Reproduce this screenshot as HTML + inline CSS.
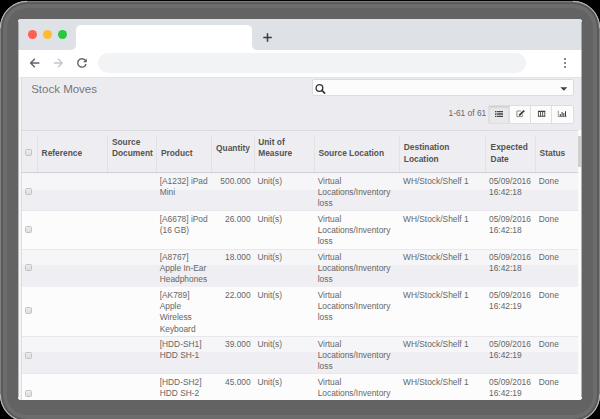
<!DOCTYPE html>
<html><head><meta charset="utf-8"><style>
*{margin:0;padding:0;box-sizing:border-box}
html,body{width:600px;height:419px;overflow:hidden;background:#000}
body{position:relative;font-family:"Liberation Sans",sans-serif}
.a{position:absolute}
.frame{left:0;top:1px;width:600px;height:420.5px;border-radius:27px;background:#636363;box-shadow:inset 0 0 0 1.2px #7e7e7e,inset 0 0 0 3px #585858,inset 0 0 0 7px #6c6c6c}
.screen{left:18px;top:19px;width:563.5px;height:380.7px;border-radius:3px;overflow:hidden;background:#ececf0}
.inner{left:-18px;top:-19px;width:600px;height:419px}
.t{white-space:nowrap;font-size:8.40px;line-height:11.25px;color:#666}
.h{white-space:nowrap;font-size:8.40px;line-height:11.25px;color:#535353;font-weight:bold}
.dot{width:9px;height:9px;border-radius:50%}
.cb{width:7px;height:7px;border:1px solid #c2c2c2;border-radius:1.5px;background:linear-gradient(#ececec,#dddddd)}
</style></head><body>
<div class="a frame"></div>
<div class="a screen"><div class="a inner">
<div class="a" style="left:18px;top:19px;width:564px;height:31px;background:#dee1e6"></div>
<div class="a dot" style="left:28.2px;top:30.3px;background:#fe5f57"></div>
<div class="a dot" style="left:42.6px;top:30.3px;background:#febc2e"></div>
<div class="a dot" style="left:57.6px;top:30.3px;background:#28c840"></div>
<div class="a" style="left:70px;top:44px;width:188px;height:6px;background:#fff"></div>
<div class="a" style="left:60px;top:40px;width:16px;height:10px;background:#dee1e6;border-bottom-right-radius:5px"></div>
<div class="a" style="left:252px;top:40px;width:16px;height:10px;background:#dee1e6;border-bottom-left-radius:5px"></div>
<div class="a" style="left:76px;top:25px;width:176px;height:25px;background:#fff;border-radius:5px 5px 0 0"></div>
<svg class="a" style="left:262px;top:32px" width="12" height="12" viewBox="0 0 12 12"><path d="M5.5 1.3V9.8M1.3 5.5H9.8" stroke="#3a3d40" stroke-width="1.5"/></svg>
<div class="a" style="left:18px;top:50px;width:564px;height:27.5px;background:#fff;border-bottom:1px solid #e4e4e8"></div>
<svg class="a" style="left:28px;top:57px" width="14" height="12" viewBox="0 0 14 12"><path d="M11.4 6H3M6.8 1.7L2.6 6L6.8 10.3" fill="none" stroke="#5f6368" stroke-width="1.4"/></svg>
<svg class="a" style="left:52px;top:57px" width="14" height="12" viewBox="0 0 14 12"><path d="M1.8 6H10M6 1.7L10.2 6L6 10.3" fill="none" stroke="#c4c7cb" stroke-width="1.4"/></svg>
<svg class="a" style="left:75px;top:57px" width="14" height="12" viewBox="0 0 14 12"><path d="M10.2 3.3A4.2 4.2 0 1 0 11 7" fill="none" stroke="#5f6368" stroke-width="1.4"/><path d="M11.8 1.4V5.2H8Z" fill="#5f6368"/></svg>
<div class="a" style="left:98px;top:53px;width:428px;height:20px;border-radius:10px;background:#f1f3f4"></div>
<div class="a" style="left:563.9px;top:58.1px;width:2.2px;height:2.2px;border-radius:50%;background:#5f6368"></div>
<div class="a" style="left:563.9px;top:62.0px;width:2.2px;height:2.2px;border-radius:50%;background:#5f6368"></div>
<div class="a" style="left:563.9px;top:65.9px;width:2.2px;height:2.2px;border-radius:50%;background:#5f6368"></div>
<div class="a" style="left:18px;top:77px;width:3px;height:330px;background:#f4f4f7"></div>
<div class="a" style="left:21px;top:77px;width:1px;height:330px;background:#dcdce2"></div>
<div class="a" style="left:31.2px;top:82.42px;font-size:11.5px;line-height:14px;color:#777;white-space:nowrap">Stock Moves</div>
<div class="a" style="left:312px;top:79px;width:261.5px;height:17px;background:#fcfcfd;border:1px solid #dcdce0;border-radius:2px"></div>
<svg class="a" style="left:315px;top:83px" width="12" height="12" viewBox="0 0 12 12"><circle cx="4.45" cy="5" r="3.35" fill="none" stroke="#333" stroke-width="1.35"/><path d="M6.9 7.4L9.6 10.1" stroke="#333" stroke-width="1.6" stroke-linecap="round"/></svg>
<svg class="a" style="left:559.5px;top:86.8px" width="8" height="4" viewBox="0 0 8 4"><path d="M0.3 0.2H7.3L3.8 3.8Z" fill="#404040"/></svg>
<div class="a t" style="left:448.5px;top:108.06px">1-61 of 61</div>
<div class="a" style="left:488px;top:104.5px;width:86px;height:19px;border:1px solid #dedede;border-radius:2px;background:#fcfcfc"></div>
<div class="a" style="left:489px;top:105.5px;width:20px;height:17px;background:#e9e9eb;box-shadow:inset 0 1.5px 2px rgba(0,0,0,.12)"></div>
<div class="a" style="left:509px;top:105px;width:1px;height:18px;background:#dedede"></div>
<div class="a" style="left:530px;top:105px;width:1px;height:18px;background:#dedede"></div>
<div class="a" style="left:551px;top:105px;width:1px;height:18px;background:#dedede"></div>
<svg class="a" style="left:494px;top:110px" width="10" height="8" viewBox="0 0 10 8"><path d="M1 1.6h1.5M1 4h1.5M1 6.4h1.5M3.1 1.6h5.9M3.1 4h5.9M3.1 6.4h5.9" stroke="#444" stroke-width="1.3"/></svg>
<svg class="a" style="left:515px;top:109px" width="11" height="10" viewBox="0 0 11 10"><path d="M6 2H1.9V7.6H7.4V5.6" fill="none" stroke="#8a8a8a" stroke-width="1"/><path d="M4.2 6.4L9.2 1.6" stroke="#333" stroke-width="1.7"/></svg>
<svg class="a" style="left:537px;top:110px" width="9" height="8" viewBox="0 0 9 8"><path d="M1 0.7H8.2V2H1Z" fill="#383838"/><path d="M1.45 1V6.7M3.55 1V6.7M5.65 1V6.7M7.75 1V6.7M1 6.25H8.2" stroke="#484848" stroke-width="0.9"/></svg>
<svg class="a" style="left:557px;top:110px" width="11" height="8" viewBox="0 0 11 8"><path d="M1.3 0.7V6.6H9.6" fill="none" stroke="#8a8a8a" stroke-width="0.9"/><path d="M2.8 4H3.8V6.4H2.8ZM4.6 2H5.6V6.4H4.6ZM6.3 3H7.3V6.4H6.3ZM8 1.3H9V6.4H8Z" fill="#3c3c3c"/></svg>
<div class="a" style="left:22px;top:130px;width:556px;height:42px;background:#eeeef2;border-top:1px solid #dcdce0"></div>
<div class="a" style="left:37px;top:134.5px;width:1px;height:37px;background:#e2e2e6"></div>
<div class="a" style="left:107px;top:134.5px;width:1px;height:37px;background:#e2e2e6"></div>
<div class="a" style="left:156px;top:134.5px;width:1px;height:37px;background:#e2e2e6"></div>
<div class="a" style="left:211px;top:134.5px;width:1px;height:37px;background:#e2e2e6"></div>
<div class="a" style="left:254px;top:134.5px;width:1px;height:37px;background:#e2e2e6"></div>
<div class="a" style="left:314px;top:134.5px;width:1px;height:37px;background:#e2e2e6"></div>
<div class="a" style="left:399px;top:134.5px;width:1px;height:37px;background:#e2e2e6"></div>
<div class="a" style="left:485px;top:134.5px;width:1px;height:37px;background:#e2e2e6"></div>
<div class="a" style="left:535px;top:134.5px;width:1px;height:37px;background:#e2e2e6"></div>
<div class="a cb" style="left:25px;top:149px"></div>
<div class="a h" style="left:41.6px;top:148.36px">Reference</div>
<div class="a h" style="left:111.9px;top:137.36px">Source</div>
<div class="a h" style="left:111.9px;top:148.36px">Document</div>
<div class="a h" style="left:160.9px;top:148.36px">Product</div>
<div class="a h" style="left:216.0px;top:142.86px">Quantity</div>
<div class="a h" style="left:258.2px;top:137.36px">Unit of</div>
<div class="a h" style="left:258.2px;top:148.36px">Measure</div>
<div class="a h" style="left:318.4px;top:148.36px">Source Location</div>
<div class="a h" style="left:403.8px;top:142.36px">Destination</div>
<div class="a h" style="left:403.8px;top:153.66px">Location</div>
<div class="a h" style="left:490.6px;top:142.36px">Expected</div>
<div class="a h" style="left:490.6px;top:153.66px">Date</div>
<div class="a h" style="left:539.6px;top:148.36px">Status</div>
<div class="a" style="left:577.5px;top:130px;width:5px;height:280px;background:#fbfbfb"></div>
<div class="a" style="left:578px;top:135.7px;width:3px;height:31px;background:#cfcfcf"></div>
<div class="a" style="left:22px;top:172px;width:556px;height:1px;background:#cfcfd3"></div>
<div class="a" style="left:22px;top:173px;width:556px;height:38px;background:#efeff3"></div>
<div class="a" style="left:22px;top:173px;width:556px;height:16.5px;background:#f6f6f8"></div>
<div class="a cb" style="left:25px;top:188px"></div>
<div class="a t" style="left:159.7px;top:175.96px">[A1232] iPad<br>Mini</div>
<div class="a t" style="right:349.4px;top:175.96px;text-align:right">500.000</div>
<div class="a t" style="left:257.4px;top:175.96px">Unit(s)</div>
<div class="a t" style="left:317.7px;top:175.96px">Virtual<br>Locations/Inventory<br>loss</div>
<div class="a t" style="left:403.0px;top:175.96px">WH/Stock/Shelf 1</div>
<div class="a t" style="left:489.0px;top:175.96px">05/09/2016<br>16:42:18</div>
<div class="a t" style="left:538.8px;top:175.96px">Done</div>
<div class="a" style="left:22px;top:211px;width:556px;height:39px;background:#fcfcfc"></div>
<div class="a cb" style="left:25px;top:226px"></div>
<div class="a t" style="left:159.7px;top:213.96px">[A6678] iPod<br>(16 GB)</div>
<div class="a t" style="right:349.4px;top:213.96px;text-align:right">26.000</div>
<div class="a t" style="left:257.4px;top:213.96px">Unit(s)</div>
<div class="a t" style="left:317.7px;top:213.96px">Virtual<br>Locations/Inventory<br>loss</div>
<div class="a t" style="left:403.0px;top:213.96px">WH/Stock/Shelf 1</div>
<div class="a t" style="left:489.0px;top:213.96px">05/09/2016<br>16:42:18</div>
<div class="a t" style="left:538.8px;top:213.96px">Done</div>
<div class="a" style="left:22px;top:249px;width:556px;height:38px;background:#efeff3"></div>
<div class="a" style="left:22px;top:249px;width:556px;height:16.0px;background:#f6f6f8"></div>
<div class="a cb" style="left:25px;top:264px"></div>
<div class="a t" style="left:159.7px;top:251.96px">[A8767]<br>Apple In-Ear<br>Headphones</div>
<div class="a t" style="right:349.4px;top:251.96px;text-align:right">18.000</div>
<div class="a t" style="left:257.4px;top:251.96px">Unit(s)</div>
<div class="a t" style="left:317.7px;top:251.96px">Virtual<br>Locations/Inventory<br>loss</div>
<div class="a t" style="left:403.0px;top:251.96px">WH/Stock/Shelf 1</div>
<div class="a t" style="left:489.0px;top:251.96px">05/09/2016<br>16:42:18</div>
<div class="a t" style="left:538.8px;top:251.96px">Done</div>
<div class="a" style="left:22px;top:287px;width:556px;height:50px;background:#fcfcfc"></div>
<div class="a cb" style="left:25px;top:307px"></div>
<div class="a t" style="left:159.7px;top:289.96px">[AK789]<br>Apple<br>Wireless<br>Keyboard</div>
<div class="a t" style="right:349.4px;top:289.96px;text-align:right">22.000</div>
<div class="a t" style="left:257.4px;top:289.96px">Unit(s)</div>
<div class="a t" style="left:317.7px;top:289.96px">Virtual<br>Locations/Inventory<br>loss</div>
<div class="a t" style="left:403.0px;top:289.96px">WH/Stock/Shelf 1</div>
<div class="a t" style="left:489.0px;top:289.96px">05/09/2016<br>16:42:19</div>
<div class="a t" style="left:538.8px;top:289.96px">Done</div>
<div class="a" style="left:22px;top:336px;width:556px;height:38px;background:#efeff3"></div>
<div class="a" style="left:22px;top:336px;width:556px;height:16.0px;background:#f6f6f8"></div>
<div class="a cb" style="left:25px;top:352px"></div>
<div class="a t" style="left:159.7px;top:338.96px">[HDD-SH1]<br>HDD SH-1</div>
<div class="a t" style="right:349.4px;top:338.96px;text-align:right">39.000</div>
<div class="a t" style="left:257.4px;top:338.96px">Unit(s)</div>
<div class="a t" style="left:317.7px;top:338.96px">Virtual<br>Locations/Inventory<br>loss</div>
<div class="a t" style="left:403.0px;top:338.96px">WH/Stock/Shelf 1</div>
<div class="a t" style="left:489.0px;top:338.96px">05/09/2016<br>16:42:19</div>
<div class="a t" style="left:538.8px;top:338.96px">Done</div>
<div class="a" style="left:22px;top:374px;width:556px;height:39px;background:#fcfcfc"></div>
<div class="a cb" style="left:25px;top:390px"></div>
<div class="a t" style="left:159.7px;top:376.96px">[HDD-SH2]<br>HDD SH-2</div>
<div class="a t" style="right:349.4px;top:376.96px;text-align:right">45.000</div>
<div class="a t" style="left:257.4px;top:376.96px">Unit(s)</div>
<div class="a t" style="left:317.7px;top:376.96px">Virtual<br>Locations/Inventory<br>loss</div>
<div class="a t" style="left:403.0px;top:376.96px">WH/Stock/Shelf 1</div>
<div class="a t" style="left:489.0px;top:376.96px">05/09/2016<br>16:42:19</div>
<div class="a t" style="left:538.8px;top:376.96px">Done</div>
<div class="a" style="left:22px;top:210px;width:556px;height:1px;background:#e8e8ec"></div>
<div class="a" style="left:22px;top:249px;width:556px;height:1px;background:#e8e8ec"></div>
<div class="a" style="left:22px;top:336px;width:556px;height:1px;background:#e8e8ec"></div>
<div class="a" style="left:22px;top:373px;width:556px;height:1px;background:#e8e8ec"></div>
</div></div>
<svg class="a" style="left:0;top:0" width="600" height="419" viewBox="0 0 600 419"><path d="M0.3 28A26.7 26.7 0 0 1 27 1.3M573 1.3A26.7 26.7 0 0 1 599.7 28M599.7 394.5A26.7 26.7 0 0 1 573 421.2M27 421.2A26.7 26.7 0 0 1 0.3 394.5" fill="none" stroke="rgba(255,255,255,.5)" stroke-width="1"/></svg>
<div class="a" style="left:18px;top:22px;width:1px;height:375px;background:rgba(97,97,97,.4)"></div>
<div class="a" style="left:581px;top:22px;width:1px;height:375px;background:rgba(97,97,97,.45)"></div>
</body></html>
